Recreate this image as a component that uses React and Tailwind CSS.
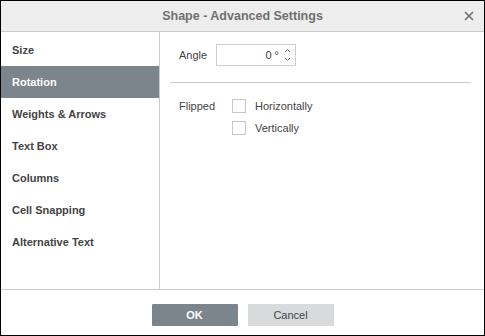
import React from "react";

export default function App() {
  const items = ["Size", "Rotation", "Weights & Arrows", "Text Box", "Columns", "Cell Snapping", "Alternative Text"];
  return (
    <div className="w-[485px] h-[336px] border border-black bg-white flex flex-col text-[#444]" style={{ fontFamily: '"Liberation Sans", Arial, sans-serif' }}>
      <div className="h-[31px] shrink-0 bg-[#ededed] border-b border-[#cbcbcb] flex items-center justify-center relative">
        <span className="text-[12.5px] font-bold text-[#707070]">Shape - Advanced Settings</span>
        <svg className="absolute right-[10px] top-[10px]" width="10" height="10" viewBox="0 0 10 10">
          <path d="M1 1L9 9M9 1L1 9" stroke="#6f6f6f" strokeWidth="1.6" />
        </svg>
      </div>
      <div className="flex flex-1 min-h-0 border-b border-[#cbcbcb]">
        <div className="w-[159px] shrink-0 border-r border-[#cbcbcb] pt-[2px]">
          {items.map((it) => (
            <div key={it} className={`h-[32px] flex items-center pl-[11px] text-[11px] font-bold ${it === "Rotation" ? "bg-[#7d858c] text-white" : "text-[#444]"}`}>
              {it}
            </div>
          ))}
        </div>
        <div className="flex-1 pl-[10px] pr-[13px] pt-[12px] text-[11px]">
          <div className="flex items-center h-[22px]">
            <span className="w-[36px] pl-[9px] box-content">Angle</span>
            <div className="ml-[1px] w-[80px] h-[22px] border border-[#cfcfcf] flex items-center justify-end pr-[5px] relative">
              <span className="mr-[11px]">0 °</span>
              <svg className="absolute right-[4px] top-[3px]" width="7" height="14" viewBox="0 0 7 14">
                <path d="M1 4L3.5 1.5L6 4" fill="none" stroke="#666" strokeWidth="0.9" />
                <path d="M1 10L3.5 12.5L6 10" fill="none" stroke="#666" strokeWidth="0.9" />
              </svg>
            </div>
          </div>
          <div className="mt-[16px] border-t border-[#cbcbcb]" />
          <div className="mt-[16px] flex">
            <span className="w-[53px] pl-[9px] box-content leading-[14px]">Flipped</span>
            <div className="flex flex-col gap-[8px]">
              <label className="flex items-center gap-[9px] leading-[14px]">
                <span className="w-[14px] h-[14px] border border-[#c8c8c8] bg-white" />
                Horizontally
              </label>
              <label className="flex items-center gap-[9px] leading-[14px]">
                <span className="w-[14px] h-[14px] border border-[#c8c8c8] bg-white" />
                Vertically
              </label>
            </div>
          </div>
        </div>
      </div>
      <div className="h-[45px] shrink-0 flex items-start justify-center gap-[10px] pt-[14px]">
        <button className="w-[86px] h-[22px] bg-[#7d858c] text-white text-[11px] font-bold rounded-[1px]">OK</button>
        <button className="w-[86px] h-[22px] bg-[#d9dadb] text-[#444] text-[11px] rounded-[1px]">Cancel</button>
      </div>
    </div>
  );
}
